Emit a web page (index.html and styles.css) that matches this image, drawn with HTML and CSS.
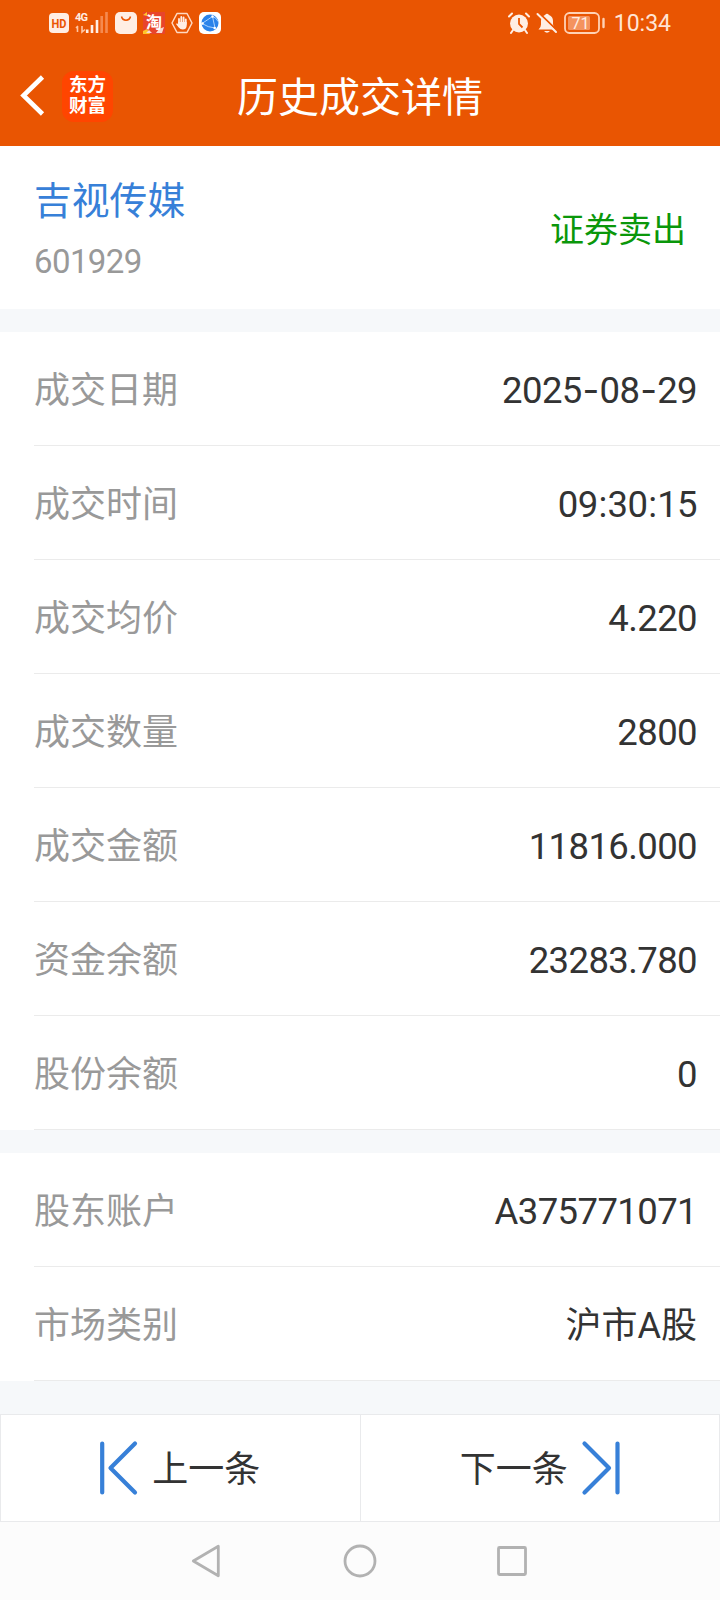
FILE: index.html
```html
<!DOCTYPE html>
<html lang="zh-CN">
<head>
    <meta charset="UTF-8">
    <meta name="viewport" content="width=device-width, initial-scale=1.0">
    <title>历史成交详情</title>
    <link rel="stylesheet" href="styles.css">
</head>
<body>
    <header>
        <div class="status-bar">
            <div class="status-left">
                <svg width="20" height="20" viewBox="0 0 20 20">
                    <rect width="20" height="20" rx="4" fill="#ffeee4"/>
                    <text x="10" y="14.7" class="hd-text" textLength="15" lengthAdjust="spacingAndGlyphs">HD</text>
                </svg>
                <svg class="signal" width="33" height="22" viewBox="0 0 33 22">
                    <text x="0" y="9" class="net-text">4G</text>
                    <path d="M2.5 14v6M7 14v6l3-2.5M1 16l2-2" stroke="#ffc5a2" stroke-width="1.6" fill="none"/>
                    <path d="M12.2 17.5v3.5M17 13v8M22 8v13" stroke="#ffeee4" stroke-width="2.6"/>
                    <path d="M26.7 4v17M31.5 0v21" stroke="#f58a50" stroke-width="2.6"/>
                </svg>
                <svg width="22" height="22" viewBox="0 0 22 22">
                    <rect width="22" height="22" rx="5" fill="#ffeee4"/>
                    <path d="M6.5 4.5a4.6 4.6 0 0 0 9 0" stroke="#eb5502" stroke-width="1.5" fill="none"/>
                </svg>
                <svg width="22" height="22" viewBox="0 0 22 22">
                    <rect width="22" height="22" fill="#e8452c"/>
                    <path d="M0 3l4-3v4zM0 19l4-2 3 5H0z" fill="#ffc629"/>
                    <path d="M3 21l3-3 3 3M13 21l3-4 5-2-2 6z" fill="#f9d9d2"/>
                    <text x="11" y="16" class="tao-text">淘</text>
                </svg>
                <svg width="22" height="22" viewBox="0 0 22 22">
                    <path d="M6 1.5h10L21 11l-5 9.5H6L1 11z" fill="none" stroke="#ffd9c2" stroke-width="1.5" stroke-linejoin="round"/>
                    <path d="M8 12V7M10.3 11V5M12.6 11V5.5M14.8 12V7.5" stroke="#ffeee4" stroke-width="1.8" stroke-linecap="round"/>
                    <path d="M7.1 10h8.6v4q-.5 3.5-4 3.5-2.5 0-4-2L5 12l1-.7 1.5 1.2z" fill="#ffeee4"/>
                </svg>
                <svg width="22" height="22" viewBox="0 0 22 22">
                    <rect width="22" height="22" rx="5" fill="#fff"/>
                    <circle cx="11" cy="11" r="8.5" fill="#2b83ea"/>
                    <path d="M3 11.5L13.5 4.5 16 16M3 11.5q6 4 13 4.5M13.5 4.5q4 1 5.5 5" stroke="#a9d2ff" stroke-width="1" fill="none"/>
                    <circle cx="3.5" cy="11.5" r="1.2" fill="#fff"/>
                    <circle cx="13.5" cy="4.5" r="1.2" fill="#fff"/>
                    <circle cx="15.7" cy="16" r="1.3" fill="#fff"/>
                </svg>
            </div>
            <div class="status-right">
                <svg width="22" height="22" viewBox="0 0 22 22">
                    <circle cx="11" cy="11.5" r="9" fill="#ffeee4"/>
                    <path d="M1 4.5L4 1.5M21 4.5L18 1.5M5 18l-2 3M17 18l2 3" stroke="#ffeee4" stroke-width="2" stroke-linecap="round"/>
                    <path d="M11 6v6l3.5 3.5" stroke="#eb5502" stroke-width="1.8" fill="none"/>
                </svg>
                <svg width="22" height="22" viewBox="0 0 22 22">
                    <path d="M2.5 17.5q2.5-2 2.5-5V9q0-4.5 4-6 2-2.5 4 0 4 1.5 4 6v3q0 3 2.5 5.5zM8 19h6q-3 3.5-6 0z" fill="#ffeee4"/>
                    <path d="M2.5 .5l19 18.5" stroke="#eb5502" stroke-width="2"/>
                    <path d="M1.5 2l18.5 18" stroke="#ffeee4" stroke-width="2" stroke-linecap="round"/>
                </svg>
                <svg class="battery" width="42" height="22" viewBox="0 0 42 22">
                    <rect x="1" y="1" width="34" height="20" rx="4.5" fill="none" stroke="#ffd2b5" stroke-width="1.8"/>
                    <rect x="4" y="4" width="22" height="14" rx="1.5" fill="#f4935f"/>
                    <path d="M39.5 7v8" stroke="#ffd2b5" stroke-width="2.4" stroke-linecap="round"/>
                    <text x="16.5" y="16.5" class="battery-text">71</text>
                </svg>
                <span class="clock">10:34</span>
            </div>
        </div>
        <div class="title-bar">
            <svg class="back" width="26" height="42" viewBox="0 0 26 42">
                <path d="M24.5 2L5.5 20.5l19 18.5" fill="none" stroke="#fff" stroke-width="4.6"/>
            </svg>
            <div class="logo">东方<br>财富</div>
            <h1>历史成交详情</h1>
        </div>
    </header>

    <section class="stock">
        <div>
            <div class="stock-name">吉视传媒</div>
            <div class="stock-code">601929</div>
        </div>
        <div class="trade-type">证券卖出</div>
    </section>

    <section class="list">
        <div class="row"><span class="label">成交日期</span><span class="value">2025<span class="dash">-</span>08<span class="dash">-</span>29</span></div>
        <div class="row"><span class="label">成交时间</span><span class="value">09<span class="colon">:</span>30<span class="colon">:</span>15</span></div>
        <div class="row"><span class="label">成交均价</span><span class="value">4.220</span></div>
        <div class="row"><span class="label">成交数量</span><span class="value">2800</span></div>
        <div class="row"><span class="label">成交金额</span><span class="value">11816.000</span></div>
        <div class="row"><span class="label">资金余额</span><span class="value">23283.780</span></div>
        <div class="row"><span class="label">股份余额</span><span class="value">0</span></div>
    </section>

    <section class="list">
        <div class="row"><span class="label">股东账户</span><span class="value">A375771071</span></div>
        <div class="row"><span class="label">市场类别</span><span class="value market">沪市A股</span></div>
    </section>

    <div class="pager">
        <div class="pager-btn">
            <svg width="38" height="54" viewBox="0 0 38 54">
                <path d="M2.2 2.5v49M35 2.5L10.5 27 35 51.5" class="arrow"/>
            </svg>
            <span>上一条</span>
        </div>
        <div class="pager-btn">
            <span>下一条</span>
            <svg width="38" height="54" viewBox="0 0 38 54">
                <path d="M35.5 2.5v49M2.5 2.5L27 27 2.5 51.5" class="arrow"/>
            </svg>
        </div>
    </div>

    <nav>
        <svg width="34" height="34" viewBox="0 0 34 34"><path d="M27.3 2.2v29.6L2.3 17z"/></svg>
        <svg width="34" height="34" viewBox="0 0 34 34"><circle cx="17" cy="17" r="15"/></svg>
        <svg width="34" height="34" viewBox="0 0 34 34"><rect x="3.5" y="3.5" width="27" height="27" rx="1"/></svg>
    </nav>
</body>
</html>
```

FILE: styles.css
```css
* {
    box-sizing: border-box;
}
body {
    margin: 0;
    height: 1600px;
    display: flex;
    flex-direction: column;
    background-color: #f6f8fa;
    font-family: Roboto, "Noto Sans CJK SC", sans-serif;
    color: #333;
}
svg {
    display: block;
    flex: none;
    overflow: visible;
}
header {
    height: 146px;
    background-color: #e95502;
    color: white;
}
.status-bar {
    display: flex;
    justify-content: space-between;
    height: 46px;
    padding: 0 49px;
}
.status-left,
.status-right {
    display: flex;
    align-items: center;
    gap: 6px;
}
.signal {
    margin-right: 1px;
}
.battery {
    margin-right: 2px;
}
.hd-text {
    font-size: 13px;
    font-weight: bold;
    fill: #eb5502;
    text-anchor: middle;
}
.net-text {
    font-size: 11px;
    font-weight: bold;
    fill: #ffeee4;
    letter-spacing: -0.8px;
}
.tao-text {
    font-size: 16px;
    font-weight: bold;
    fill: white;
    text-anchor: middle;
}
.battery-text {
    font-size: 16px;
    fill: #ffeee4;
    text-anchor: middle;
}
.clock {
    padding-top: 1px;
    font-size: 23px;
    line-height: 46px;
    color: #ffe4d4;
}
.title-bar {
    display: grid;
    grid-template-columns: 26px 51px 1fr 95px;
    align-items: center;
    height: 100px;
    padding-left: 18px;
}
.back {
    margin-top: -1px;
}
.logo {
    width: 51px;
    height: 51px;
    margin-left: 18px;
    padding-top: 4px;
    border-radius: 12px;
    background-color: #ff4500;
    font-size: 18.5px;
    font-weight: bold;
    line-height: 21.5px;
    text-align: center;
}
h1 {
    margin: 0;
    padding-top: 4px;
    font-size: 41px;
    font-weight: normal;
    line-height: 60px;
    text-align: center;
}
.stock {
    display: flex;
    justify-content: space-between;
    align-items: center;
    height: 163px;
    padding: 0 34px;
    margin-bottom: 23px;
    background-color: white;
}
.stock-name {
    padding-top: 6px;
    font-size: 37.8px;
    line-height: 62px;
    color: #3780d8;
}
.stock-code {
    font-size: 33px;
    line-height: 60px;
    letter-spacing: -0.6px;
    color: #999;
}
.trade-type {
    padding-bottom: 1px;
    font-size: 34px;
    color: #0a970a;
}
.list {
    margin-bottom: 23px;
    background-color: white;
}
.row {
    display: flex;
    justify-content: space-between;
    align-items: center;
    height: 114px;
    padding: 0 23px 0 34px;
    background: linear-gradient(#ebebeb, #ebebeb) 34px 100% / 100% 1px no-repeat;
    font-size: 36px;
}
.label {
    padding-bottom: 4px;
    color: #999;
}
.value {
    padding-top: 2px;
    font-size: 36.5px;
    letter-spacing: -0.6px;
}
.dash {
    padding: 0 0.8px;
    font-family: Inter, sans-serif;
}
.colon {
    padding: 0 0.8px;
}
.market {
    padding: 0 0 4px;
    font-size: 36px;
    letter-spacing: 0;
}
.pager {
    display: flex;
    height: 108px;
    margin-top: 10px;
    border: 1px solid #e9eaec;
    background-color: white;
}
.pager-btn {
    flex: 1;
    display: flex;
    justify-content: center;
    align-items: center;
    gap: 14px;
    font-size: 36px;
}
.pager-btn span {
    padding-bottom: 4px;
}
.pager-btn + .pager-btn {
    border-left: 1px solid #e9eaec;
}
.arrow {
    fill: none;
    stroke: #3780d8;
    stroke-width: 4.2;
    stroke-linecap: round;
    stroke-linejoin: round;
}
nav {
    flex: 1;
    display: flex;
    justify-content: center;
    align-items: center;
    gap: 118px;
    background-color: #fcfcfc;
}
nav svg {
    fill: none;
    stroke: #b2b2b2;
    stroke-width: 2.8;
    stroke-linejoin: round;
}
```
